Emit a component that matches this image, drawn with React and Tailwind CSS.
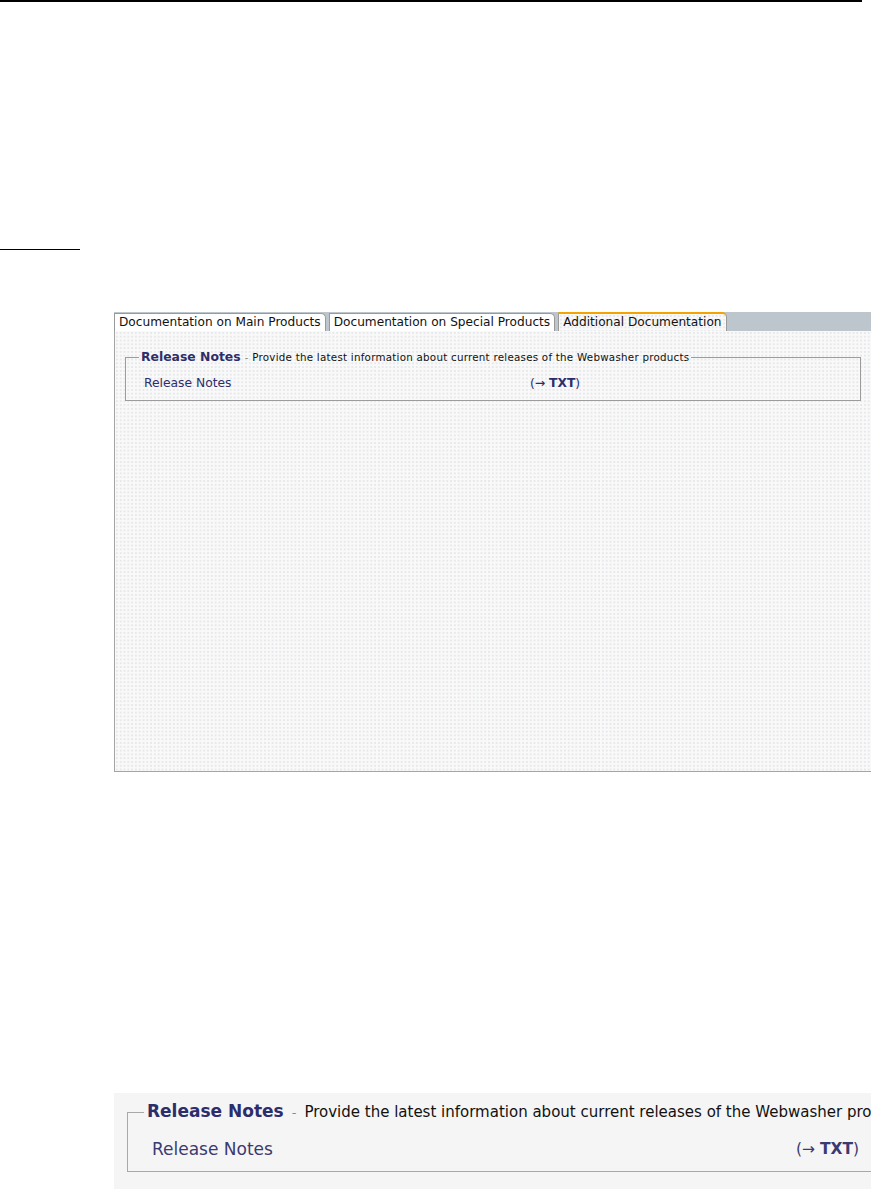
import React from 'react';

const dots =
  'bg-[#f9f9f9] bg-[radial-gradient(circle,#c9cdd3_0.55px,transparent_0.75px)] bg-[length:3.8px_3.8px]';

const Tab = ({ label, active = false }) => (
  <div
    className={
      active
        ? `h-[19px] px-[4px] border border-b-0 border-[#9a9a9a] border-t-2 border-t-[#f5a300] rounded-tr-[5px] ${dots} text-[12.15px] leading-[16px] text-[#111]`
        : 'h-[18px] px-[4px] border border-b-0 border-[#9a9a9a] rounded-tr-[5px] bg-white text-[12.15px] leading-[16px] text-[#111]'
    }
  >
    {label}
  </div>
);

const App = () => {
  return (
    <div className="relative w-[871px] h-[1189px] overflow-hidden bg-white font-['DejaVu_Sans',sans-serif]">
      {/* top rule */}
      <div className="w-[862px] h-[2px] bg-black" />

      {/* short underline */}
      <div className="mt-[247px] w-[80px] h-px bg-black" />

      {/* tab panel */}
      <div className="ml-[114px] mt-[62px] h-[460px] flex flex-col">
        <div className="h-[19px] flex items-end gap-[3px] bg-[#bec6cd]">
          <Tab label="Documentation on Main Products" />
          <Tab label="Documentation on Special Products" />
          <Tab label="Additional Documentation" active />
        </div>
        <div className={`flex-1 border-l border-b border-[#a4a4a4] ${dots} pl-[10px] pr-[10px] pt-[18px]`}>
          <fieldset className="w-[736px] border border-[#9c9c9c] px-[18px] pb-[9px]">
            <legend className="ml-[-5px] px-[2px] leading-[14px]">
              <span className="text-[12.4px] font-bold text-[#2d2d6b]">Release Notes</span>
              <span className="text-[10px] text-[#8a8a8a] px-[4px]">-</span>
              <span className="text-[10.3px] tracking-[0.25px] text-[#111]">Provide the latest information about current releases of the Webwasher products</span>
            </legend>
            <div className="flex items-center text-[12.3px] text-[#2d2d6b] leading-[16px] mt-[10px]">
              <span className="w-[386px]">Release Notes</span>
              <span>
                (→ <span className="font-bold">TXT</span>)
              </span>
            </div>
          </fieldset>
        </div>
      </div>

      {/* magnified detail */}
      <div className="ml-[114px] mt-[321px] h-[100px] bg-[#f5f5f5] overflow-hidden pl-[13px] pt-[8px]">
        <fieldset className="w-[1000px] border border-r-0 border-[#a8a8a8] pl-[24px] pb-[12px]">
          <legend className="ml-[-8px] px-[3px] leading-[20px]">
            <span className="text-[17px] font-bold text-[#2d2d6b]">Release Notes</span>
            <span className="text-[13px] text-[#8a8a8a] px-[8px]">-</span>
            <span className="text-[15px] text-[#111]">Provide the latest information about current releases of the Webwasher products</span>
          </legend>
          <div className="flex items-center text-[17px] text-[#3a3a70] leading-[20px] mt-[16px]">
            <span className="w-[644px]">Release Notes</span>
            <span className="text-[15.5px]">
              (→ <span className="font-bold">TXT</span>)
            </span>
          </div>
        </fieldset>
      </div>
    </div>
  );
};

export default App;
